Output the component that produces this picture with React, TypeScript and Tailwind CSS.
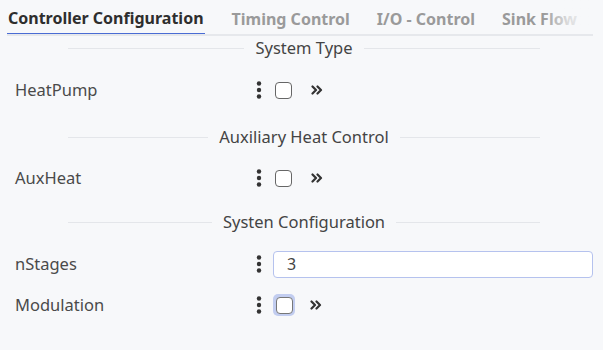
import React from 'react';

const tabs = ['Controller Configuration', 'Timing Control', 'I/O - Control', 'Sink Flow'];

const Kebab: React.FC = () => (
    <svg width="6" height="18" viewBox="0 0 6 18" className="shrink-0">
        <circle cx="3" cy="2.5" r="2.2" fill="#333" />
        <circle cx="3" cy="9" r="2.2" fill="#333" />
        <circle cx="3" cy="15.5" r="2.2" fill="#333" />
    </svg>
);

const Chevrons: React.FC = () => (
    <svg width="12" height="10" viewBox="0 0 12 10" className="shrink-0">
        <path d="M1.5 1.5L5 5L1.5 8.5M6.5 1.5L10 5L6.5 8.5" fill="none" stroke="#333" strokeWidth={2.2} strokeLinecap="round" strokeLinejoin="round" />
    </svg>
);

const SectionHeader: React.FC<{ title: string; className?: string }> = ({ title, className }) => (
    <div className={`flex items-center h-[24px] ml-[68px] w-[472px] ${className ?? ''}`}>
        <div className="flex-1 h-px bg-[#e4e6ea]" />
        <span className="px-[11px] text-[16.5px] text-[#444]">{title}</span>
        <div className="flex-1 h-px bg-[#e4e6ea]" />
    </div>
);

const CheckRow: React.FC<{ label: string; focused?: boolean; className?: string }> = ({ label, focused, className }) => (
    <div className={`flex items-center h-[40px] ${className ?? ''}`}>
        <span className="w-[256px] pl-[15px] text-[16.5px] text-[#4a4a4a]">{label}</span>
        <Kebab />
        {focused ? (
            <span className="ml-[11px] w-[22px] h-[22px] rounded-[5px] bg-[#c2cdf0] flex items-center justify-center">
                <span className="w-[17px] h-[17px] rounded-[4px] border border-[#777] bg-white" />
            </span>
        ) : (
            <span className="ml-[13px] w-[17px] h-[17px] rounded-[4px] border border-[#666] bg-white" />
        )}
        <span className={focused ? 'ml-[15px]' : 'ml-[19px]'}>
            <Chevrons />
        </span>
    </div>
);

export default function App() {
    return (
        <div className="w-full h-[350px] bg-[#f7f8fa] overflow-hidden" style={{ fontFamily: '"Noto Sans", "Open Sans", sans-serif' }}>
            <div className="relative flex items-end h-[36px] ml-[7px] mr-[10px] border-b-2 border-[#e6e8ec] overflow-hidden">
                {tabs.map((t, i) => (
                    <div
                        key={t}
                        className={`whitespace-nowrap pb-[3px] text-[16px] font-bold ${i === 0 ? 'text-[#2e2e2e] border-b-[3px] border-[#4a6cd4] -mb-[2px] pl-[1px] pr-[1px]' : 'text-[#9a9a9a] ml-[27px]'}`}
                    >
                        {t}
                    </div>
                ))}
                <div className="absolute right-0 top-0 bottom-[2px] w-[50px] bg-gradient-to-r from-transparent via-[#f7f8fa]/70 to-[#f7f8fa]" />
            </div>

            <SectionHeader title="System Type" />
            <CheckRow label="HeatPump" className="mt-[10px]" />

            <SectionHeader title="Auxiliary Heat Control" className="mt-[15px]" />
            <CheckRow label="AuxHeat" className="mt-[9px]" />

            <SectionHeader title="Systen Configuration" className="mt-[12px]" />
            <div className="flex items-center h-[40px] mt-[10px]">
                <span className="w-[256px] pl-[15px] text-[16.5px] text-[#4a4a4a]">nStages</span>
                <Kebab />
                <div className="ml-[11px] w-[320px] h-[27px] rounded-[4px] border border-[#b5c2ee] bg-white flex items-center pl-[13px] text-[16px] text-[#444]">
                    3
                </div>
            </div>
            <CheckRow label="Modulation" focused className="mt-[1px]" />
        </div>
    );
}
